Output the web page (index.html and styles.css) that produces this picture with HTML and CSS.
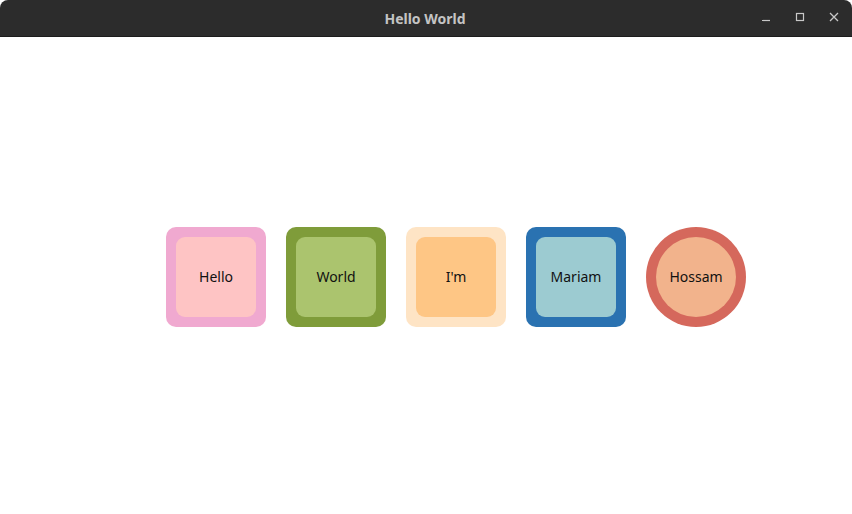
FILE: index.html
```html
<!DOCTYPE html>
<html>
<head>
<meta charset="utf-8">
<link rel="stylesheet" href="styles.css">
</head>
<body>
<div class="window">
  <header class="titlebar">
    <div class="title">Hello World</div>
    <div class="controls">
      <svg class="ctl" width="12" height="12" viewBox="0 0 12 12"><path d="M2 9.5H10" stroke="#c8c8c8" stroke-width="1.2"/></svg>
      <svg class="ctl" width="12" height="12" viewBox="0 0 12 12"><rect x="2.5" y="2.5" width="7" height="7" fill="none" stroke="#c8c8c8" stroke-width="1.2"/></svg>
      <svg class="ctl" width="12" height="12" viewBox="0 0 12 12"><path d="M2 2L10 10M10 2L2 10" stroke="#c8c8c8" stroke-width="1.3"/></svg>
    </div>
  </header>
  <main class="content">
    <div class="row">
      <div class="tile pink"><div class="inner">Hello</div></div>
      <div class="tile green"><div class="inner">World</div></div>
      <div class="tile peach"><div class="inner">I'm</div></div>
      <div class="tile blue"><div class="inner">Mariam</div></div>
      <div class="tile red round"><div class="inner">Hossam</div></div>
    </div>
  </main>
</div>
</body>
</html>
```

FILE: styles.css
```css
html, body {
  margin: 0;
  padding: 0;
  background: #ffffff;
}
.window {
  width: 852px;
  height: 514px;
  display: flex;
  flex-direction: column;
  font-family: "Noto Sans", "DejaVu Sans", sans-serif;
}
.titlebar {
  height: 36px;
  background: #2c2c2c;
  border-bottom: 1px solid #1c1c1c;
  border-radius: 8px 8px 0 0;
  position: relative;
  display: flex;
  align-items: center;
  justify-content: center;
}
.title {
  color: #c4c4c4;
  font-weight: bold;
  font-size: 14px;
  margin-left: -2px;
}
.controls {
  position: absolute;
  right: 12px;
  top: 11px;
  display: flex;
  gap: 22px;
}
.ctl {
  display: block;
}
.content {
  flex: 1;
  padding-top: 190px;
  padding-left: 166px;
}
.row {
  display: flex;
  gap: 20px;
}
.tile {
  width: 100px;
  height: 100px;
  box-sizing: border-box;
  padding: 10px;
  border-radius: 10px;
}
.inner {
  width: 80px;
  height: 80px;
  box-sizing: border-box;
  padding-bottom: 2px;
  border-radius: 9px;
  display: flex;
  align-items: center;
  justify-content: center;
  font-size: 14px;
  color: #111111;
}
.round, .round .inner {
  border-radius: 50%;
}
.pink { background: #f0a9d0; }
.pink .inner { background: #fec4c4; }
.green { background: #7f9c3a; }
.green .inner { background: #abc46e; }
.peach { background: #fee4c5; }
.peach .inner { background: #fec685; }
.blue { background: #2a72b1; }
.blue .inner { background: #9ccbd1; }
.red { background: #d5685c; }
.red .inner { background: #f2b38c; }
```
